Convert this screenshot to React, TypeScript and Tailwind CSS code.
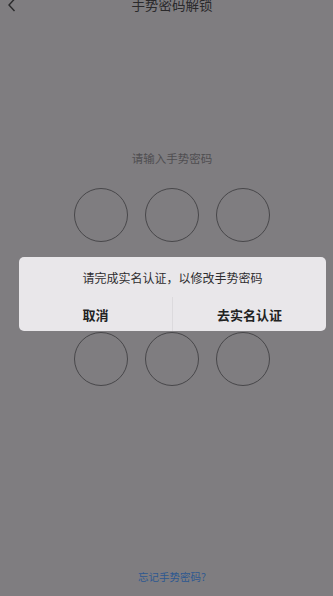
import React from 'react';

const font = { fontFamily: '"Noto Sans CJK SC", "Noto Sans", sans-serif' };

const Dot: React.FC = () => (
    <div className="w-[54px] h-[54px] rounded-full border border-[#48474a]" />
);

const App: React.FC = () => {
    return (
        <div className="relative w-[333px] h-[596px] overflow-hidden bg-[#7f7d80]" style={font}>
            {/* page underneath */}
            <div className="flex flex-col h-full pl-[11px]">
                <div className="relative h-[12px] flex items-center justify-center">
                    <svg className="absolute left-[-4px] top-[-2px]" width="10" height="14" viewBox="0 0 10 14">
                        <path d="M7.5 1 L2 7 L7.5 13" fill="none" stroke="#2a2a2b" strokeWidth="1.4" />
                    </svg>
                    <span className="text-[13.5px] leading-none text-[#2a292b] -mt-[2px]">手势密码解锁</span>
                </div>

                <p className="mt-[139px] text-center text-[11.5px] leading-[14px] text-[#4f4e51]">请输入手势密码</p>

                <div className="mt-[23px] mx-auto grid grid-cols-3 gap-x-[17px] gap-y-[18px]">
                    {Array.from({ length: 9 }).map((_, i) => (
                        <Dot key={i} />
                    ))}
                </div>

                <div className="flex-1" />
                <p className="mb-[12px] text-center text-[10.5px] leading-[14px] text-[#2d5890]">忘记手势密码?</p>
            </div>

            {/* dialog */}
            <div className="absolute left-[19px] top-[257px] w-[307px] h-[74px] rounded-[5px] bg-[#e9e7ea] flex flex-col">
                <p className="h-[40px] flex items-center justify-center pt-[2px] text-[12px] text-[#2e2d2f]">
                    请完成实名认证，以修改手势密码
                </p>
                <div className="flex flex-1">
                    <button className="flex-1 flex items-center justify-center pt-[1px] text-[13px] font-bold text-[#222]">取消</button>
                    <div className="w-px bg-[#dcdadd]" />
                    <button className="flex-1 flex items-center justify-center pt-[1px] text-[13px] font-bold text-[#222]">去实名认证</button>
                </div>
            </div>
        </div>
    );
};

export default App;
